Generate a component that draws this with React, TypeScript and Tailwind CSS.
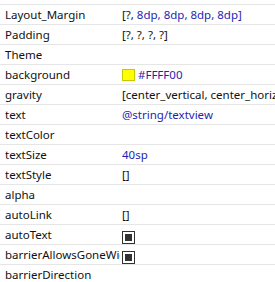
import type { ReactNode } from "react";

const blue = "text-[#1f1fb0]";

const Swatch = () => (
  <span className="mr-[3px] inline-block h-[12px] w-[13px] border border-[#c8c800] bg-[#ffff00] align-[-2px]" />
);

const Check = () => (
  <span className="inline-flex h-[13px] w-[13px] items-center justify-center border border-[#333] bg-white align-[-2px]">
    <span className="h-[7px] w-[7px] bg-[#333]" />
  </span>
);

const rows: { name: string; value?: ReactNode }[] = [
  {
    name: "Layout_Margin",
    value: (
      <>
        [?, <span className={blue}>8dp, 8dp, 8dp, 8dp]</span>
      </>
    ),
  },
  { name: "Padding", value: "[?, ?, ?, ?]" },
  { name: "Theme" },
  {
    name: "background",
    value: (
      <>
        <Swatch />
        <span className={blue}>#FFFF00</span>
      </>
    ),
  },
  { name: "gravity", value: "[center_vertical, center_horizontal]" },
  { name: "text", value: <span className={blue}>@string/textview</span> },
  { name: "textColor" },
  { name: "textSize", value: <span className={blue}>40sp</span> },
  { name: "textStyle", value: "[]" },
  { name: "alpha" },
  { name: "autoLink", value: "[]" },
  { name: "autoText", value: <Check /> },
  { name: "barrierAllowsGoneWidgets", value: <Check /> },
  { name: "barrierDirection" },
];

export default function App() {
  return (
    <div className="h-[282px] w-[275px] overflow-hidden bg-white pt-[4px] font-['Noto_Sans',sans-serif] text-[11.5px] text-[#111]">
      <div className="border-t border-[#e6e6e6]">
        {rows.map((row) => (
          <div key={row.name} className="flex h-[20px] border-b border-[#e6e6e6] leading-[19px]">
            <div className="w-[120px] shrink-0 overflow-hidden whitespace-nowrap pl-[5px]">
              {row.name}
            </div>
            <div className="min-w-0 flex-1 overflow-hidden whitespace-nowrap pl-[2px]">
              {row.value}
            </div>
          </div>
        ))}
      </div>
    </div>
  );
}
